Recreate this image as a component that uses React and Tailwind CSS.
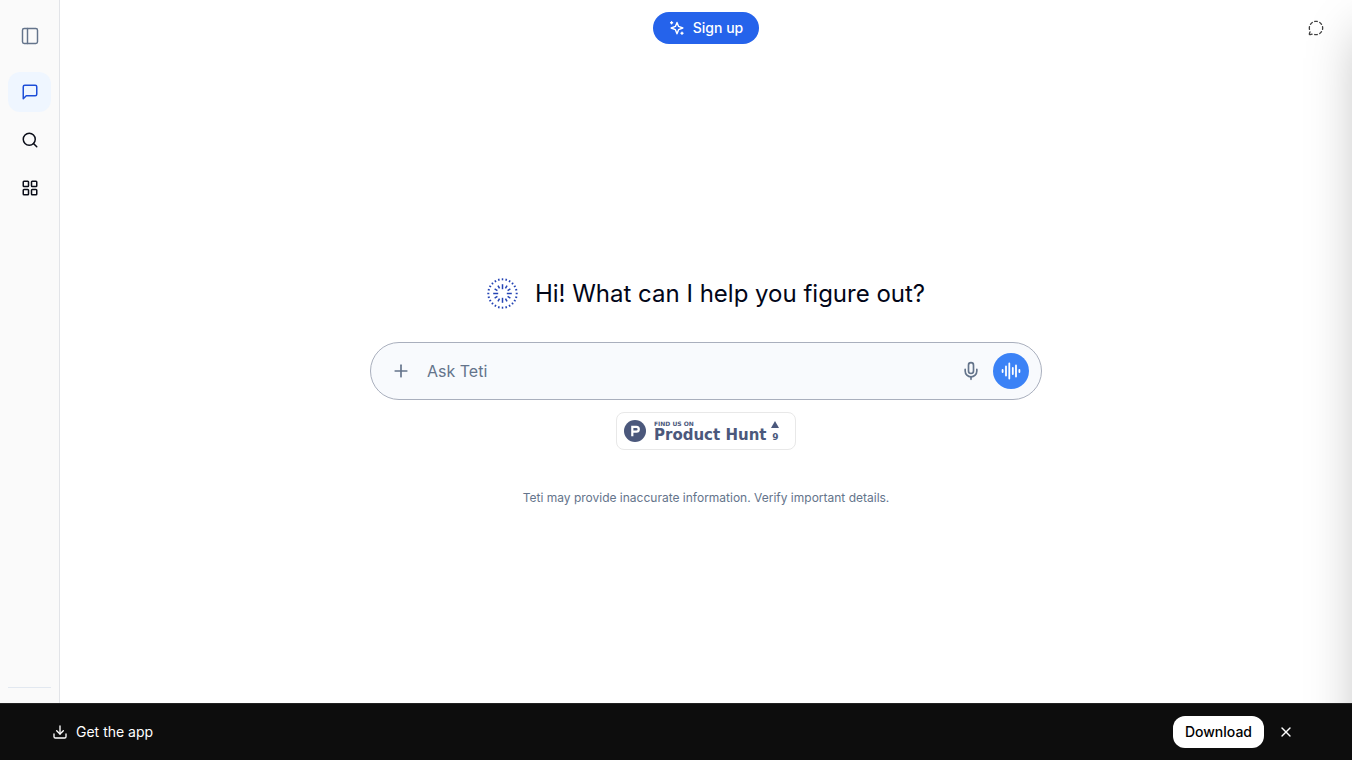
import { useState } from 'react'
import {
  Download,
  LayoutGrid,
  MessageCircleDashed,
  Mic,
  PanelLeft,
  Plus,
  Search,
  X,
} from 'lucide-react'

function ChatIcon({ className }) {
  return (
    <svg className={className} viewBox="0 0 24 24" fill="none" stroke="currentColor" strokeWidth="2" strokeLinecap="round" strokeLinejoin="round" aria-hidden="true">
      <path d="M21 15a2 2 0 0 1-2 2H7l-4 4V5a2 2 0 0 1 2-2h14a2 2 0 0 1 2 2z" />
    </svg>
  )
}

const NAV = [
  { label: 'Chat', icon: ChatIcon, active: true },
  { label: 'Search', icon: Search },
  { label: 'Apps', icon: LayoutGrid },
]

const RING = Array.from({ length: 24 }, (_, i) => i * 15)
const RAYS = Array.from({ length: 12 }, (_, i) => i * 30)

function Logo() {
  return (
    <svg className="size-8 text-[#2444b4]" viewBox="0 0 32 32" fill="none" stroke="currentColor" aria-hidden="true">
      {RING.map(a => (
        <path key={a} d="M15.5 0.3v2" strokeWidth="1.5" transform={`rotate(${a} 15.5 15.5)`} />
      ))}
      {RAYS.map(a => (
        <path key={a} d={a % 90 === 0 ? 'M15.5 6.2v5' : 'M15.5 6.4v3.2'} strokeWidth="1.5" transform={`rotate(${a} 15.5 15.5)`} />
      ))}
    </svg>
  )
}

function SparkleIcon() {
  return (
    <svg className="size-4" viewBox="0 0 16 16" fill="none" stroke="currentColor" strokeWidth="1.4" strokeLinecap="round" strokeLinejoin="round" aria-hidden="true">
      <path d="M8 2.4 9.6 6.4 13.8 8 9.6 9.7 8 13.8 6.4 9.7 2.2 8 6.4 6.4Z" />
      <path d="M2.6 1.7v2M1.6 2.7h2M13 12.2v2M12 13.2h2" />
    </svg>
  )
}

function WaveIcon() {
  return (
    <svg className="size-5" viewBox="0 0 20 20" fill="none" stroke="currentColor" strokeWidth="1.8" strokeLinecap="round" aria-hidden="true">
      <path d="M1.6 9v2M5 5.5v9M8.3 2.5v15M11.8 7v6M15 4.5v11M18.4 9v2" />
    </svg>
  )
}

function Sidebar() {
  return (
    <aside className="flex w-15 shrink-0 flex-col border-r border-[#e2e4e8] bg-[#fafafa] px-2 pt-4">
      <button type="button" aria-label="Toggle sidebar" className="flex h-10 items-center justify-center text-[#64748b]">
        <PanelLeft className="size-5" strokeWidth={1.75} />
      </button>
      <nav className="mt-4 flex flex-1 flex-col gap-2">
        {NAV.map(({ label, icon: Icon, active }) => (
          <button
            key={label}
            type="button"
            aria-label={label}
            className={`flex h-10 items-center justify-center rounded-xl ${active ? 'bg-[#eff6ff] text-[#1d4ed8]' : 'text-[#0a0d18]'}`}
          >
            <Icon className="size-[18px]" />
          </button>
        ))}
      </nav>
      <div className="h-[73px] border-t border-slate-200" />
    </aside>
  )
}

function Composer() {
  const [text, setText] = useState('')

  return (
    <form
      onSubmit={e => e.preventDefault()}
      className="mt-8 flex h-[58px] w-full items-center rounded-full border border-[#a9afbd] bg-[#f8fafd] px-3"
    >
      <button type="button" aria-label="Add attachment" className="flex size-9 items-center justify-center text-[#64748b]">
        <Plus className="size-5" strokeWidth={2} />
      </button>
      <input
        value={text}
        onChange={e => setText(e.target.value)}
        placeholder="Ask Teti"
        aria-label="Ask Teti"
        className="ml-2 min-w-0 flex-1 text-base text-slate-900 placeholder:text-[#64748b] focus:outline-none"
      />
      <button type="button" aria-label="Dictate" className="flex size-9 items-center justify-center text-[#64748b]">
        <Mic className="size-5" strokeWidth={2} />
      </button>
      <button type="button" aria-label="Voice mode" className="ml-1 flex size-9 items-center justify-center rounded-full bg-[#3b82f6] text-white">
        <WaveIcon />
      </button>
    </form>
  )
}

function ProductHuntBadge() {
  return (
    <a
      href="#product-hunt"
      className="mt-3 flex h-[38px] w-[180px] items-center rounded-lg border border-[#e8e8e8] bg-white pl-[7px] font-['DejaVu_Sans',sans-serif] font-bold text-[#4b587c]"
    >
      <svg className="size-[22px]" viewBox="0 0 22 22" aria-hidden="true">
        <circle cx="11" cy="11" r="11" fill="currentColor" />
        <path d="M7.2 5.8h5.2a3.5 3.5 0 0 1 0 7H9.4v3.4H7.2zM9.4 8v2.6h2.9a1.3 1.3 0 0 0 0-2.6z" fill="#fff" fillRule="evenodd" />
      </svg>
      <span className="ml-2 flex flex-col whitespace-nowrap">
        <span className="text-[6px] leading-[8px]">FIND US ON</span>
        <span className="text-[15px] leading-[15px]">Product Hunt</span>
      </span>
      <span className="ml-[5px] flex flex-col items-center gap-1">
        <svg className="h-[7px] w-2" viewBox="0 0 8 7" fill="currentColor" aria-hidden="true">
          <path d="M4 0 8 7H0z" />
        </svg>
        <span className="text-[9px] leading-[10px]">9</span>
      </span>
    </a>
  )
}

function AppBanner({ onClose }) {
  return (
    <div className="fixed inset-x-0 bottom-0 z-20 flex h-[57px] items-center border-t border-[#222] bg-[#0d0d0d] pr-[50px] pl-13 text-white">
      <Download className="size-4" strokeWidth={2} />
      <span className="ml-2 flex-1 text-sm">Get the app</span>
      <button type="button" className="h-8 rounded-xl bg-white px-3 text-sm font-medium text-black">
        Download
      </button>
      <button type="button" aria-label="Close" onClick={onClose} className="ml-1.5 flex size-8 items-center justify-center">
        <X className="size-4" strokeWidth={2} />
      </button>
    </div>
  )
}

export default function App() {
  const [banner, setBanner] = useState(true)

  return (
    <div className="flex min-h-screen overflow-hidden bg-white font-['Inter',sans-serif] text-slate-950">
      <Sidebar />
      <main className="flex min-w-0 flex-1 flex-col">
        <header className="grid h-14 grid-cols-3 items-center">
          <button type="button" className="col-start-2 flex h-8 items-center gap-2 justify-self-center rounded-full bg-[#2563eb] px-4 text-sm font-medium text-white">
            <SparkleIcon />
            Sign up
          </button>
          <button type="button" aria-label="Temporary chat" className="mr-5 flex size-8 items-center justify-center justify-self-end text-neutral-700">
            <MessageCircleDashed className="size-4" strokeWidth={2} />
          </button>
        </header>
        <section className="flex flex-1 flex-col items-center justify-center px-4 pb-8">
          <div className="flex w-full max-w-2xl flex-col items-center">
            <div className="flex items-center gap-4">
              <Logo />
              <h1 className="text-2xl">Hi! What can I help you figure out?</h1>
            </div>
            <Composer />
            <ProductHuntBadge />
            <p className="mt-10 text-xs text-[#64748b]">
              Teti may provide inaccurate information. Verify important details.
            </p>
          </div>
        </section>
      </main>
      {/* closed drawer, only its shadow reaches into the page */}
      <div className="pointer-events-none fixed inset-y-0 right-0 z-10 w-96 translate-x-full bg-white shadow-[0_25px_50px_-8px_rgba(0,0,0,0.27)]" />
      {banner && <AppBanner onClose={() => setBanner(false)} />}
    </div>
  )
}
